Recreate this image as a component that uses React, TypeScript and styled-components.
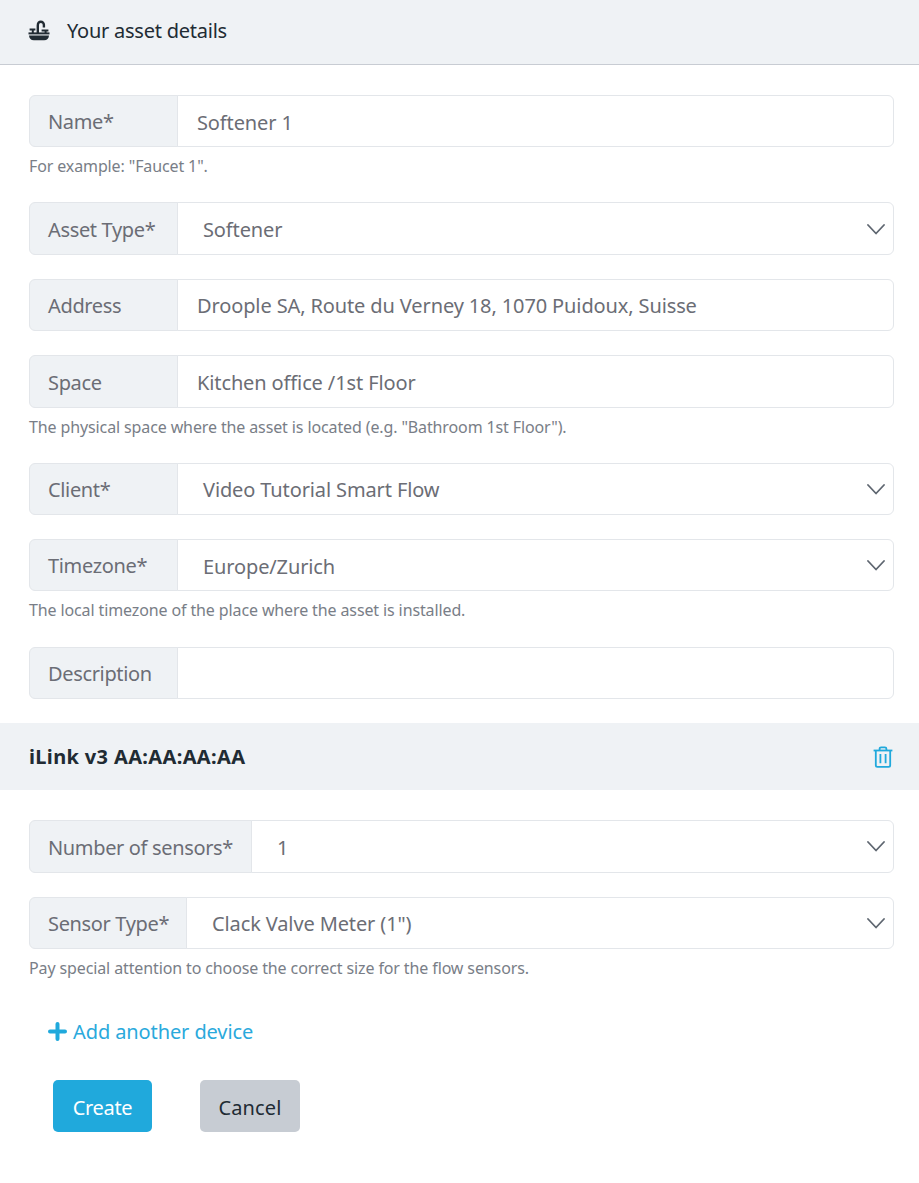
import React from "react";
import styled, { createGlobalStyle } from "styled-components";

const Global = createGlobalStyle`
  html, body { margin: 0; padding: 0; background: #fff; }
  body { font-family: "Noto Sans", "Open Sans", sans-serif; color: #212529; }
  * { box-sizing: border-box; }
`;

const Page = styled.div`
  width: 919px;
  height: 1183px;
  overflow: hidden;
`;

const Header = styled.div`
  height: 65px;
  background: #eff2f5;
  border-bottom: 1px solid #c8ccd3;
  display: flex;
  align-items: center;
  padding: 0 0 3px 28px;
  gap: 17px;
  font-size: 20px;
  letter-spacing: -0.24px;
  color: #212b33;
`;

const Form = styled.div<{ $top: number }>`
  padding: ${(p) => p.$top}px 25px 0 29px;
`;

const Group = styled.div`
  display: flex;
  height: 52.4px;
  margin-bottom: 24px;
`;

const Label = styled.div<{ $w: number }>`
  width: ${(p) => p.$w}px;
  flex: none;
  background: #eff2f5;
  border: 1px solid #e3e6ea;
  border-radius: 6px 0 0 6px;
  display: flex;
  align-items: center;
  padding: 1.4px 0 0 18px;
  font-size: 20px;
  letter-spacing: -0.35px;
  color: #6b6d75;
`;

const Field = styled.div`
  flex: 1;
  position: relative;
  margin-left: -1px;
  border: 1px solid #e3e6ea;
  border-radius: 0 6px 6px 0;
  display: flex;
  align-items: center;
  padding: 2px 0 0 19px;
  font-size: 20px;
  letter-spacing: -0.12px;
  color: #6b6d75;
`;

const SelectField = styled(Field)`
  padding: 2px 0 0 25px;
`;

const Chevron = styled.svg`
  position: absolute;
  right: 8px;
  top: 50%;
  margin-top: -7px;
  width: 18px;
  height: 14px;
`;

const Help = styled.div<{ $after?: number }>`
  font-size: 16px;
  letter-spacing: -0.12px;
  color: #797e87;
  margin-top: -16px;
  height: 22px;
  line-height: 22px;
  margin-bottom: ${(p) => p.$after ?? 25.1}px;
`;

const Band = styled.div`
  height: 67px;
  background: #eff2f5;
  display: flex;
  align-items: center;
  justify-content: space-between;
  padding: 1px 26px 0 29px;
  font-size: 20px;
  font-weight: 700;
  letter-spacing: 0.35px;
  color: #212b33;
`;

const AddLink = styled.div`
  display: flex;
  align-items: center;
  gap: 6px;
  margin: 0 0 0 19px;
  height: 30px;
  font-size: 20px;
  letter-spacing: -0.1px;
  color: #2aa9dc;
`;

const Actions = styled.div`
  display: flex;
  gap: 48px;
  margin: 33px 0 0 24px;
`;

const Button = styled.div<{ $primary?: boolean }>`
  height: 52px;
  width: ${(p) => (p.$primary ? 99 : 100)}px;
  border-radius: 5px;
  display: flex;
  align-items: center;
  justify-content: center;
  padding-top: 3px;
  font-size: 20px;
  letter-spacing: ${(p) => (p.$primary ? -0.35 : 0.1)}px;
  background: ${(p) => (p.$primary ? "#20a9dc" : "#c7ccd3")};
  color: ${(p) => (p.$primary ? "#fff" : "#212b33")};
`;

const Arrow = () => (
  <Chevron viewBox="0 0 18 14" fill="none">
    <path d="M1 3l8 8.500 8-8.500" stroke="#5e6670" strokeWidth="1.800" strokeLinecap="round" strokeLinejoin="round" />
  </Chevron>
);

const SinkIcon = () => (
  <svg width="22" height="21" viewBox="0 0 22 21" fill="#212b33">
    <path d="M0.500 12.400h21v2H0.500z" />
    <path d="M1 15.400h20c-.2 3-2 4.900-4.800 4.900H5.800C3 20.300 1.200 18.400 1 15.400z" />
    <path d="M8.600 13V5.400C8.600 2.300 10.400.6 12.800.6s4.200 1.600 4.300 4.200v2.700h-2.400V5c0-1.300-.7-2-1.900-2s-1.800.8-1.800 2.500V13z" />
    <path d="M1.600 8.400h5.800v2H5.800V13H3.800v-2.600H1.600zM13.600 9.400h6.800v2h-1.800V13h-2v-1.600h-3z" />
  </svg>
);

const TrashIcon = () => (
  <svg width="20" height="22" viewBox="0 0 20 22" fill="none" stroke="#20a9dc" strokeWidth="1.800">
    <path d="M0.600 4.500h18.800" />
    <path d="M6.600 4.500V2.800c0-.9.600-1.500 1.500-1.500h3.800c.9 0 1.500.600 1.500 1.500v1.700" />
    <path d="M2.800 4.500v14.700c0 .9.700 1.600 1.600 1.600h11.200c.9 0 1.600-.7 1.600-1.600V4.500" />
    <path d="M7.400 8v9.200M12.600 8v9.200" />
  </svg>
);

const PlusIcon = () => (
  <svg width="19" height="19" viewBox="0 0 19 19" fill="none" stroke="#20a9dc" strokeWidth="4" strokeLinecap="round">
    <path d="M9.500 2v15M2 9.500h15" />
  </svg>
);

const TextRow = ({ label, w, value }: { label: string; w: number; value?: string }) => (
  <Group>
    <Label $w={w}>{label}</Label>
    <Field>{value}</Field>
  </Group>
);

const SelectRow = ({ label, w, value }: { label: string; w: number; value: string }) => (
  <Group>
    <Label $w={w}>{label}</Label>
    <SelectField>
      {value}
      <Arrow />
    </SelectField>
  </Group>
);

export default function App() {
  return (
    <Page>
      <Global />
      <Header>
        <SinkIcon />
        <span>Your asset details</span>
      </Header>
      <Form $top={29.9}>
        <TextRow label="Name*" w={149} value="Softener 1" />
        <Help>For example: "Faucet 1".</Help>
        <SelectRow label="Asset Type*" w={149} value="Softener" />
        <TextRow label="Address" w={149} value="Droople SA, Route du Verney 18, 1070 Puidoux, Suisse" />
        <TextRow label="Space" w={149} value="Kitchen office /1st Floor" />
        <Help>The physical space where the asset is located (e.g. "Bathroom 1st Floor").</Help>
        <SelectRow label="Client*" w={149} value="Video Tutorial Smart Flow" />
        <SelectRow label="Timezone*" w={149} value="Europe/Zurich" />
        <Help>The local timezone of the place where the asset is installed.</Help>
        <TextRow label="Description" w={149} />
      </Form>
      <Band>
        <span>iLink v3 AA:AA:AA:AA</span>
        <TrashIcon />
      </Band>
      <Form $top={30.3}>
        <SelectRow label="Number of sensors*" w={223} value="1" />
        <SelectRow label="Sensor Type*" w={158} value={'Clack Valve Meter (1")'} />
        <Help $after={37.7}>Pay special attention to choose the correct size for the flow sensors.</Help>
        <AddLink>
          <PlusIcon />
          <span>Add another device</span>
        </AddLink>
        <Actions>
          <Button $primary>Create</Button>
          <Button>Cancel</Button>
        </Actions>
      </Form>
    </Page>
  );
}
